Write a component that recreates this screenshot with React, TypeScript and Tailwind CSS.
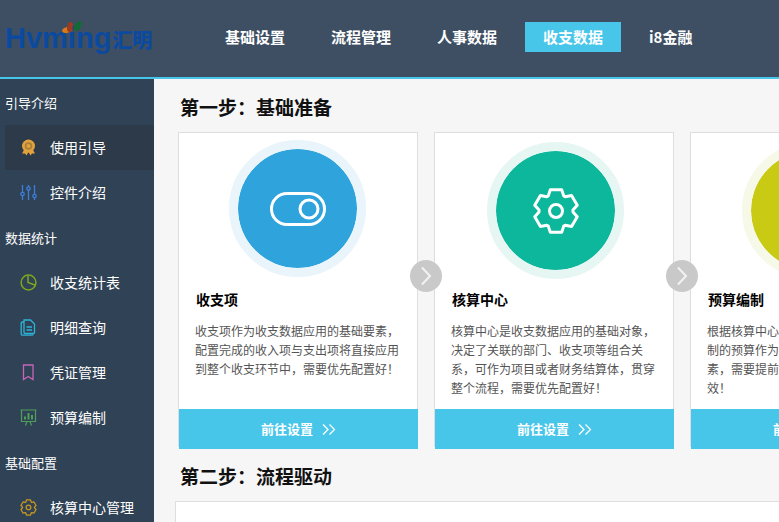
import type { ReactNode } from "react";

// six-tooth gear outline, teeth pointing up/down and to the four diagonals
const gearPath = (c: number, outer: number, inner: number) => {
  const pts: string[] = [];
  for (let i = 0; i < 6; i++) {
    const a = -90 + i * 60;
    [[-27, inner], [-15, outer], [15, outer], [27, inner]].forEach(([d, r]) => {
      const rad = ((a + d) * Math.PI) / 180;
      pts.push(`${(c + r * Math.cos(rad)).toFixed(2)} ${(c + r * Math.sin(rad)).toFixed(2)}`);
    });
  }
  return `M${pts.join(" L")} Z`;
};

const GearIcon = ({ size, color, width }: { size: number; color: string; width: number }) => (
  <svg width={size} height={size} viewBox="0 0 48 48" fill="none" stroke={color} strokeWidth={width} strokeLinejoin="round">
    <path d={gearPath(24, 22, 17)} />
    <circle cx="24" cy="24" r="6.5" />
  </svg>
);

const MedalIcon = () => (
  <svg width="17" height="17" viewBox="0 0 17 17" fill="none">
    <path d="M4.5 10 L2 14.5 L5 14.5 L6.5 16.5 L8.5 13 L10.5 16.5 L12 14.5 L15 14.5 L12.5 10 Z" fill="#e3a23c" />
    <circle cx="8.5" cy="7" r="6.5" fill="#e3a23c" />
    <circle cx="8.5" cy="7" r="3.8" fill="#a8803c" />
    <circle cx="8.5" cy="7" r="2" fill="#e3a23c" />
  </svg>
);

const SlidersIcon = () => (
  <svg width="17" height="17" viewBox="0 0 17 17" fill="none" stroke="#3c7fd9" strokeWidth="1.3">
    <path d="M2.5 1 V8.5 M2.5 11.5 V16 M8.5 1 V3 M8.5 6 V16 M14.5 1 V10.5 M14.5 13.5 V16" />
    <circle cx="2.5" cy="10" r="1.7" />
    <circle cx="8.5" cy="4.5" r="1.7" />
    <circle cx="14.5" cy="12" r="1.7" />
  </svg>
);

const PieIcon = () => (
  <svg width="17" height="17" viewBox="0 0 17 17" fill="none" stroke="#7ca81e" strokeWidth="1.5">
    <circle cx="8.5" cy="8.5" r="7.4" />
    <path d="M8 1.5 V8.5 L15 11" />
  </svg>
);

const FilesIcon = () => (
  <svg width="17" height="17" viewBox="0 0 17 17" fill="none" stroke="#2cb4d8" strokeWidth="1.3">
    <path d="M4 3 H2.5 Q1.2 3 1.2 4.3 V15 Q1.2 16.2 2.5 16.2 H12 Q13 16.2 13 15.2" />
    <path d="M4 1 H10.5 L14.5 5 V13.5 Q14.5 14.5 13.5 14.5 H5 Q4 14.5 4 13.5 Z" />
    <path d="M6.5 8 H12 M6.5 11 H12" />
  </svg>
);

const MarkIcon = () => (
  <svg width="17" height="17" viewBox="0 0 17 17" fill="none" stroke="#c766b9" strokeWidth="1.3">
    <path d="M3.5 1 H13 V15.5 L8.2 12.5 L3.5 15.5 Z" />
  </svg>
);

const BoardIcon = () => (
  <svg width="17" height="17" viewBox="0 0 17 17" fill="none" stroke="#4f9f5a" strokeWidth="1.2">
    <path d="M0.5 1 H16.5 M1.5 1 V12.5 H15.5 V1 M5.5 16.5 L7 12.5 M11.5 16.5 L10 12.5" />
    <path d="M5 10.5 V7.5 M8.5 10.5 V4 M12 10.5 V6" strokeWidth="2" />
  </svg>
);

const navItems = ["基础设置", "流程管理", "人事数据", "收支数据", "i8金融"];

const sideGroups = [
  {
    label: "引导介绍",
    items: [
      { name: "使用引导", icon: <MedalIcon />, active: true },
      { name: "控件介绍", icon: <SlidersIcon /> },
    ],
  },
  {
    label: "数据统计",
    items: [
      { name: "收支统计表", icon: <PieIcon /> },
      { name: "明细查询", icon: <FilesIcon /> },
      { name: "凭证管理", icon: <MarkIcon /> },
      { name: "预算编制", icon: <BoardIcon /> },
    ],
  },
  {
    label: "基础配置",
    items: [{ name: "核算中心管理", icon: <GearIcon size={17} color="#c9981f" width={3.6} /> }],
  },
];

const ToggleIcon = () => (
  <svg className="ml-[2px]" width="60" height="38" viewBox="0 0 60 38" fill="none" stroke="white" strokeWidth="3">
    <rect x="3.5" y="3.5" width="53" height="31" rx="15.5" />
    <circle cx="41" cy="19" r="9" />
  </svg>
);

const ArrowBadge = () => (
  <div className="absolute -right-[25px] top-[127px] z-10 flex h-8 w-8 items-center justify-center rounded-full bg-[#c9c9c9]">
    <svg width="12" height="20" viewBox="0 0 12 20" fill="none" stroke="#f2f2f2" strokeWidth="2">
      <path d="M2 1.5 L10 10 L2 18.5" />
    </svg>
  </div>
);

type CardProps = {
  title: string;
  lines: string[];
  circleClass: string;
  ringClass: string;
  offsetClass: string;
  icon: ReactNode;
  arrow?: boolean;
};

const StepCard = ({ title, lines, circleClass, ringClass, offsetClass, icon, arrow }: CardProps) => (
  <div className="relative flex h-[315px] w-[240px] shrink-0 flex-col border border-[#dedede] bg-white">
    <div className="flex h-[156px] shrink-0 justify-center">
      <div className={`flex h-[137px] w-[137px] items-center justify-center rounded-full border-[9px] ${ringClass} ${circleClass} ${offsetClass}`}>
        {icon}
      </div>
    </div>
    <h3 className="pl-[17px] text-[14px] font-bold leading-[20px] text-black">{title}</h3>
    <div className="mt-[12px] pl-[16px] text-[12px] leading-[19px] text-[#555555]">
      {lines.map((line) => (
        <p key={line} className="whitespace-nowrap">{line}</p>
      ))}
    </div>
    <button className="-mb-[3px] -mr-px mt-auto flex h-10 shrink-0 items-center justify-center gap-[9px] bg-[#48c6ea] text-[13px] font-bold text-white">
      前往设置
      <svg width="14" height="11" viewBox="0 0 14 11" fill="none" stroke="white" strokeWidth="1.3">
        <path d="M1 0.5 L6 5.5 L1 10.5 M7.5 0.5 L12.5 5.5 L7.5 10.5" />
      </svg>
    </button>
    {arrow && <ArrowBadge />}
  </div>
);

export default function App() {
  return (
    <div className="flex h-[522px] w-[779px] flex-col overflow-hidden bg-[#f6f6f6] font-['Noto_Sans_CJK_SC','Noto_Sans',sans-serif]">
      <header className="flex h-[79px] shrink-0 border-b-2 border-[#48c6ea] bg-[#3e4f63]">
        <div className="relative w-[207px] shrink-0 pl-[5px] pt-[21px]">
          <svg className="absolute left-[60px] top-[19px]" width="24" height="15" viewBox="0 0 24 15">
            <ellipse cx="7" cy="11" rx="5" ry="2.8" fill="#d9791c" transform="rotate(-15 7 11)" />
            <ellipse cx="10" cy="8" rx="2.8" ry="5" fill="#9c3a22" transform="rotate(10 10 8)" />
            <ellipse cx="18" cy="7" rx="3" ry="5.5" fill="#136b34" transform="rotate(30 18 7)" />
          </svg>
          <div className="flex items-baseline whitespace-nowrap font-bold leading-[34px] text-[#0b4a9f]">
            <span className="font-['Liberation_Sans',sans-serif] text-[29px]">Hvming</span>
            <span className="ml-[1px] text-[20px] font-black leading-[34px]">汇明</span>
          </div>
        </div>
        <nav className="flex gap-[10px] pt-[22px]">
          {navItems.map((item) => (
            <a
              key={item}
              className={`flex h-[30px] w-[96px] items-center pl-[18px] text-[15px] font-bold text-white ${item === "收支数据" ? "bg-[#48c6ea]" : ""}`}
            >
              {item}
            </a>
          ))}
        </nav>
      </header>

      <div className="flex min-h-0 flex-1">
        <aside className="w-[154px] shrink-0 overflow-hidden bg-[#304255] pt-[1px] text-white">
          {sideGroups.map((group) => (
            <div key={group.label}>
              <div className="flex h-[45px] items-center pl-[5px] text-[13px]">{group.label}</div>
              {group.items.map((item) => (
                <div
                  key={item.name}
                  className={`ml-[5px] flex h-[45px] items-center gap-[13px] pl-[15px] text-[14px] ${item.active ? "bg-[#2d3a4a]" : ""}`}
                >
                  {item.icon}
                  <span className="whitespace-nowrap">{item.name}</span>
                </div>
              ))}
            </div>
          ))}
        </aside>

        <main className="min-w-0 flex-1 overflow-hidden">
          <h2 className="h-[53px] pl-[26px] pt-[15px] text-[19px] font-bold leading-[26px] text-[#111111]">第一步：基础准备</h2>
          <div className="mb-[2px] ml-[24px] flex gap-4">
            <StepCard
              title="收支项"
              lines={["收支项作为收支数据应用的基础要素，", "配置完成的收入项与支出项将直接应用", "到整个收支环节中，需要优先配置好！"]}
              circleClass="bg-[#2ea3dc] bg-clip-padding"
              ringClass="border-[#e9f5fa]"
              offsetClass="-ml-[2px] mt-[7px]"
              icon={<ToggleIcon />}
              arrow
            />
            <StepCard
              title="核算中心"
              lines={["核算中心是收支数据应用的基础对象，", "决定了关联的部门、收支项等组合关", "系，可作为项目或者财务结算体，贯穿", "整个流程，需要优先配置好！"]}
              circleClass="bg-[#0cb79c] bg-clip-padding"
              ringClass="border-[#e6f6f3]"
              offsetClass="ml-[3px] mt-[9px]"
              icon={<GearIcon size={48} color="white" width={3} />}
              arrow
            />
            <StepCard
              title="预算编制"
              lines={["根据核算中心与收支项进行预算编", "制的预算作为收支数据应用的基础要", "素，需要提前配置并审批后才能生", "效！"]}
              circleClass="bg-[#c8ca14] bg-clip-padding"
              ringClass="border-[#f6f8e8]"
              offsetClass="mt-[9px]"
              icon={null}
            />
          </div>
          <h2 className="h-[52px] pl-[26px] pt-[14px] text-[19px] font-bold leading-[26px] text-[#111111]">第二步：流程驱动</h2>
          <div className="ml-[21px] h-[200px] w-[700px] border border-[#dedede] bg-white" />
        </main>
      </div>
    </div>
  );
}
